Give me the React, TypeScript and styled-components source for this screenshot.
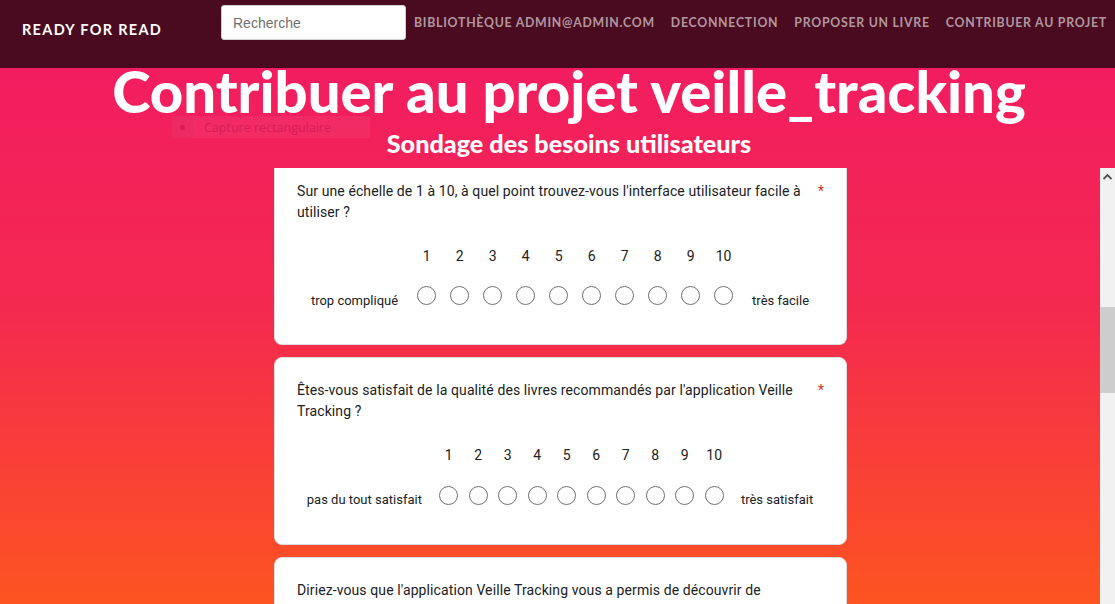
import React from "react";
import styled, { createGlobalStyle } from "styled-components";

const GlobalStyle = createGlobalStyle`
  html, body { margin: 0; padding: 0; }
  body { font-family: "Roboto", "Liberation Sans", sans-serif; overflow: hidden; }
  * { box-sizing: border-box; }
`;

const Page = styled.div`
  position: relative;
  width: 100%;
  height: 604px;
  display: flex;
  flex-direction: column;
  overflow: hidden;
`;

const Navbar = styled.nav`
  height: 68px;
  flex: none;
  background: #4a0a20;
  display: flex;
  align-items: flex-start;
`;

const Brand = styled.a`
  flex: none;
  font-family: "Lato", sans-serif;
  font-weight: 700;
  font-size: 14.5px;
  letter-spacing: 1.3px;
  color: #ffffff;
  text-transform: uppercase;
  padding: 21px 0 0 22px;
  width: 221px;
  line-height: 18px;
  white-space: nowrap;
`;

const Search = styled.input`
  flex: none;
  margin-top: 5px;
  width: 185px;
  height: 35px;
  border: 1px solid #cfcfcf;
  border-radius: 3px;
  background: #fff;
  padding: 0 11px;
  font-family: "Liberation Sans", Arial, sans-serif;
  font-size: 14px;
  color: #333;
  &::placeholder { color: #6f6f6f; }
`;

const Links = styled.ul`
  list-style: none;
  margin: 0;
  padding: 0;
  display: flex;
  flex: none;
`;

const LinkItem = styled.li`
  font-family: "Lato", sans-serif;
  font-weight: 700;
  font-size: 12.3px;
  letter-spacing: 0.75px;
  text-transform: uppercase;
  color: rgba(255, 255, 255, 0.58);
  padding: 14px 8px 0;
  line-height: 18px;
  white-space: nowrap;
`;

const Main = styled.main`
  flex: 1;
  min-height: 0;
  display: flex;
  flex-direction: column;
  background: linear-gradient(180deg, #f21d60 0%, #f4294f 45%, #fd5421 100%);
`;

const Header = styled.header`
  padding-left: 23px;
  display: flex;
  flex-direction: column;
  align-items: center;
`;

const Title = styled.h1`
  margin: 0;
  text-align: center;
  font-family: "Lato", sans-serif;
  font-weight: 900;
  font-size: 58px;
  line-height: 45px;
  color: #ffffff;
  white-space: nowrap;
`;

const Subtitle = styled.h2`
  margin: 15px 0 0;
  text-align: center;
  font-family: "Lato", sans-serif;
  font-weight: 900;
  font-size: 25.2px;
  line-height: 30px;
  color: #ffffff;
`;

const FormFrame = styled.section`
  margin-top: 10px;
  flex: 1;
  min-height: 0;
  display: flex;
  overflow: hidden;
`;

const FormColumn = styled.div`
  flex: 1;
  display: flex;
  flex-direction: column;
  align-items: center;
  gap: 12px;
  padding-left: 21px;
`;

const Card = styled.div<{ $cut?: boolean }>`
  width: 573px;
  flex: none;
  background: #ffffff;
  border: 1px solid #dadce0;
  border-top: ${(p) => (p.$cut ? "none" : "1px solid #dadce0")};
  border-radius: ${(p) => (p.$cut ? "0 0 8px 8px" : "8px")};
  padding: ${(p) => (p.$cut ? "12.5px" : "22px")} 20px 28.5px 22px;
  font-family: "Roboto", sans-serif;
  color: #202124;
`;

const QuestionRow = styled.div`
  display: flex;
  align-items: flex-start;
`;

const QuestionText = styled.div`
  flex: 1;
  font-size: 14px;
  line-height: 21px;
  letter-spacing: 0.1px;
`;

const Required = styled.span<{ $shown: boolean }>`
  color: #d93025;
  font-size: 14px;
  line-height: 21px;
  margin-left: 8px;
  width: 8px;
  visibility: ${(p) => (p.$shown ? "visible" : "hidden")};
`;

const Scale = styled.div<{ $col: number }>`
  margin-top: 23px;
  margin-right: 3px;
  display: grid;
  grid-template-columns: auto repeat(10, ${(p) => p.$col}px) auto;
  grid-template-rows: 20px 40px;
  row-gap: 10px;
  justify-content: center;
  align-items: center;
  font-size: 14px;
`;

const Num = styled.span`
  text-align: center;
  line-height: 20px;
`;

const EndLabel = styled.span<{ $side: "left" | "right" }>`
  padding: 10px 12px 0;
  font-size: 13px;
  line-height: 20px;
  white-space: nowrap;
  text-align: ${(p) => (p.$side === "left" ? "right" : "left")};
`;

const Radio = styled.span`
  justify-self: center;
  width: 19px;
  height: 19px;
  border-radius: 50%;
  border: 1.5px solid #6f7175;
  background: #fff;
`;

const Scrollbar = styled.div`
  width: 15px;
  flex: none;
  background: #f1f1f1;
  display: flex;
  flex-direction: column;
  align-items: center;
`;

const ScrollArrow = styled.div`
  width: 15px;
  height: 17px;
  display: flex;
  align-items: center;
  justify-content: center;
`;

const ScrollThumb = styled.div`
  margin-top: 122px;
  width: 15px;
  height: 86px;
  background: #cdcdcd;
`;

const Ghost = styled.div`
  position: absolute;
  left: 172px;
  top: 116px;
  width: 198px;
  height: 22px;
  display: flex;
  align-items: center;
  background: rgba(255, 255, 255, 0.05);
`;

const GhostIcon = styled.span`
  width: 21px;
  height: 22px;
  display: flex;
  align-items: center;
  justify-content: center;
  background: rgba(0, 0, 0, 0.02);
  &::after {
    content: "";
    width: 5px;
    height: 5px;
    border-radius: 50%;
    background: #d91b55;
  }
`;

const GhostText = styled.span`
  margin-left: 11px;
  font-family: "Open Sans", sans-serif;
  font-size: 12.5px;
  color: #d71c56;
`;

type Q = {
  text: string;
  required?: boolean;
  scale?: { left: string; right: string; col: number };
  cut?: boolean;
};

const questions: Q[] = [
  {
    text: "Sur une échelle de 1 à 10, à quel point trouvez-vous l'interface utilisateur facile à utiliser ?",
    required: true,
    scale: { left: "trop compliqué", right: "très facile", col: 33 },
    cut: true,
  },
  {
    text: "Êtes-vous satisfait de la qualité des livres recommandés par l'application Veille Tracking ?",
    required: true,
    scale: { left: "pas du tout satisfait", right: "très satisfait", col: 29.5 },
  },
  {
    text: "Diriez-vous que l'application Veille Tracking vous a permis de découvrir de nouveaux livres ?",
  },
];

const nums = Array.from({ length: 10 }, (_, i) => i + 1);

function QuestionCard({ q }: { q: Q }) {
  return (
    <Card $cut={q.cut}>
      <QuestionRow>
        <QuestionText>{q.text}</QuestionText>
        <Required $shown={!!q.required}>*</Required>
      </QuestionRow>
      {q.scale && (
        <Scale $col={q.scale.col}>
          <span />
          {nums.map((n) => (
            <Num key={n}>{n}</Num>
          ))}
          <span />
          <EndLabel $side="left">{q.scale.left}</EndLabel>
          {nums.map((n) => (
            <Radio key={n} role="radio" aria-label={String(n)} />
          ))}
          <EndLabel $side="right">{q.scale.right}</EndLabel>
        </Scale>
      )}
    </Card>
  );
}

export default function App() {
  return (
    <>
      <GlobalStyle />
      <Page>
        <Navbar>
          <Brand>Ready for Read</Brand>
          <Search placeholder="Recherche" />
          <Links>
            <LinkItem>Bibliothèque admin@admin.com</LinkItem>
            <LinkItem>Deconnection</LinkItem>
            <LinkItem>Proposer un livre</LinkItem>
            <LinkItem>Contribuer au projet</LinkItem>
          </Links>
        </Navbar>
        <Main>
          <Header>
            <Title>Contribuer au projet veille_tracking</Title>
            <Subtitle>Sondage des besoins utilisateurs</Subtitle>
          </Header>
          <FormFrame>
            <FormColumn>
              {questions.map((q, i) => (
                <QuestionCard key={i} q={q} />
              ))}
            </FormColumn>
            <Scrollbar>
              <ScrollArrow>
                <svg width="9" height="6" viewBox="0 0 9 6">
                  <path d="M0.5 5 L4.5 1 L8.5 5" fill="none" stroke="#505050" strokeWidth="1.8" />
                </svg>
              </ScrollArrow>
              <ScrollThumb />
            </Scrollbar>
          </FormFrame>
        </Main>
        <Ghost>
          <GhostIcon />
          <GhostText>Capture rectangulaire</GhostText>
        </Ghost>
      </Page>
    </>
  );
}
